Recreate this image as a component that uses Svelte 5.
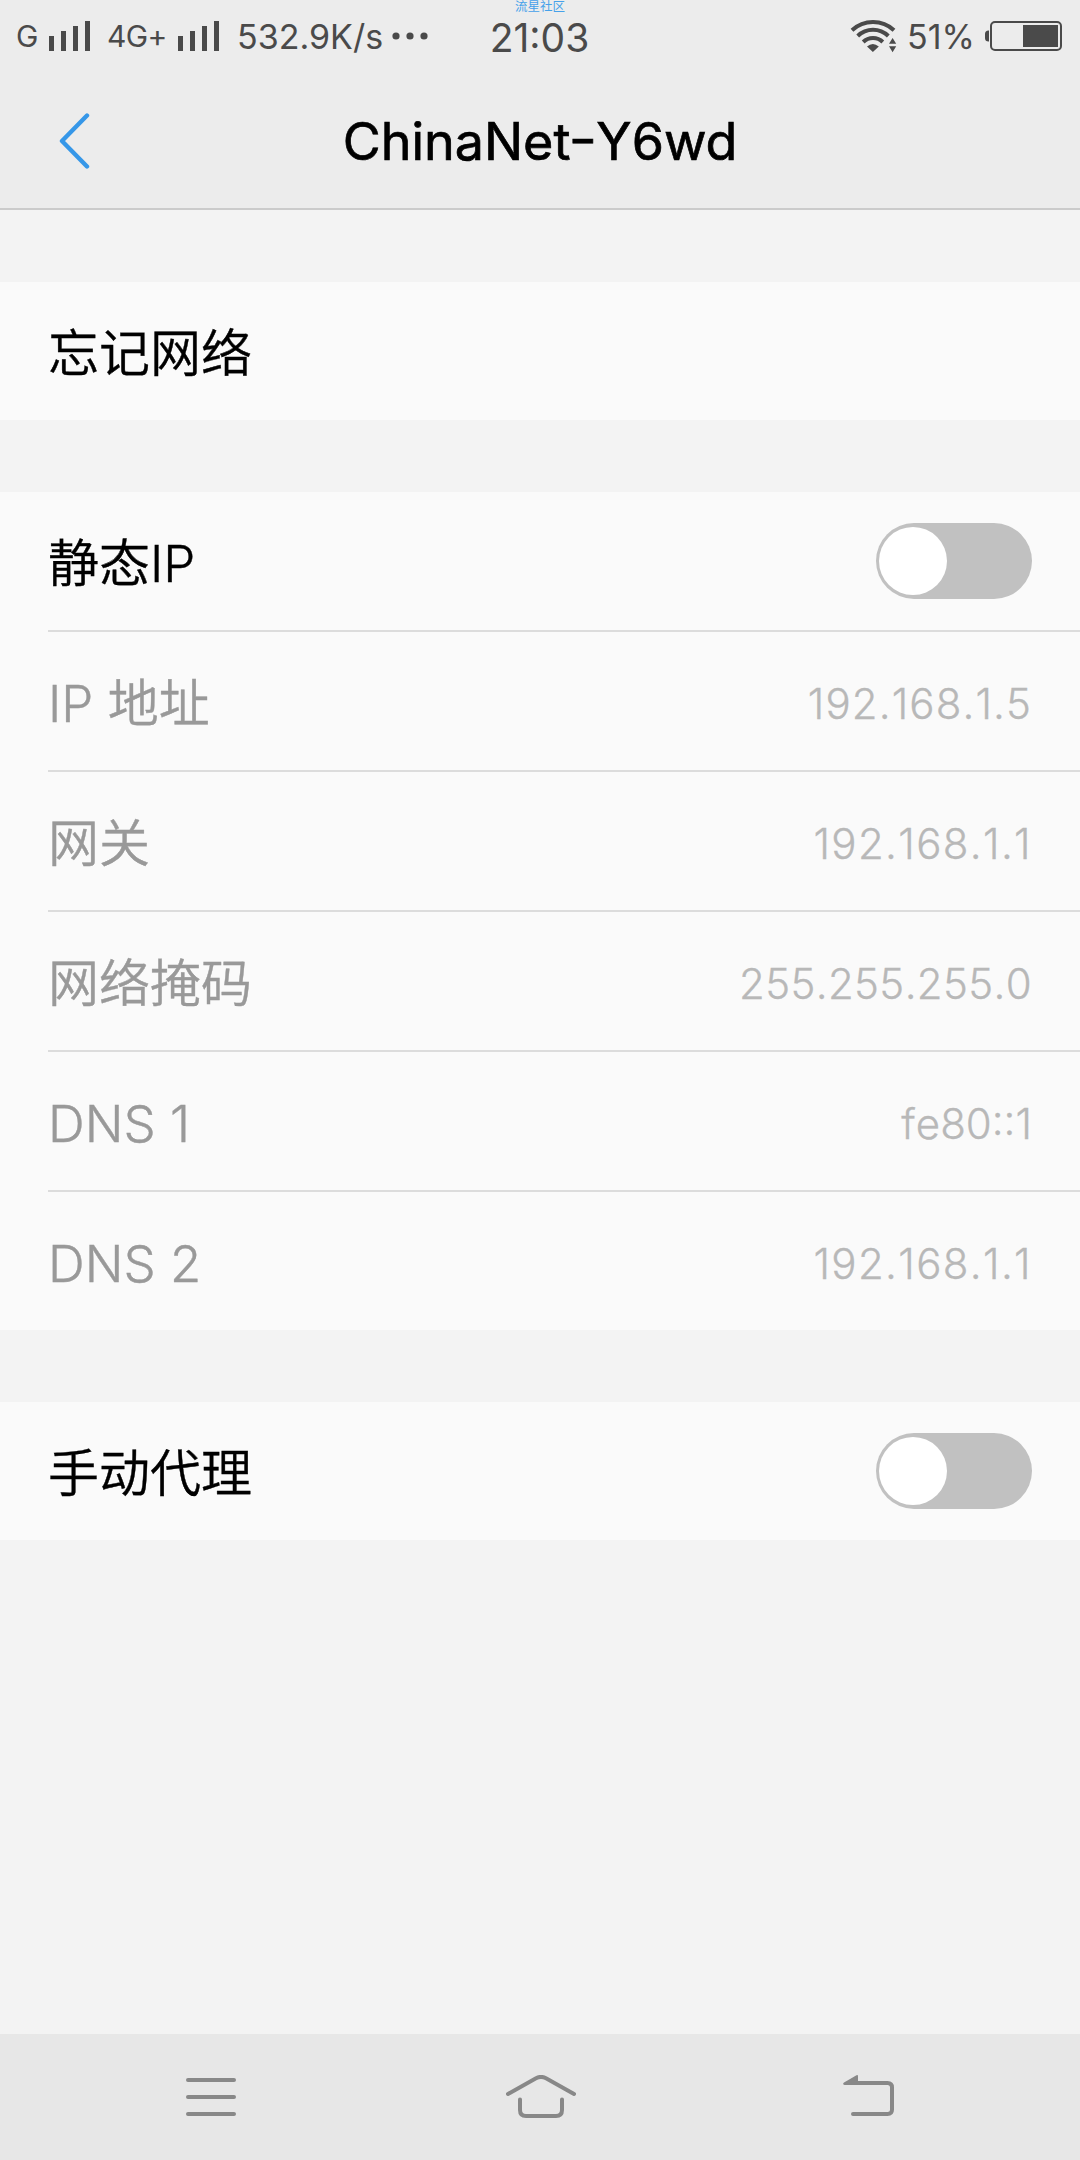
<script>
	let staticIp = false;
	let manualProxy = false;

	const details = [
		{ label: 'IP 地址', value: '192.168.1.5', tracking: 1.1 },
		{ label: '网关', value: '192.168.1.1', tracking: 1.35 },
		{ label: '网络掩码', value: '255.255.255.0', tracking: 0.35 },
		{ label: 'DNS 1', value: 'fe80::1', tracking: 0 },
		{ label: 'DNS 2', value: '192.168.1.1', tracking: 1.35 }
	];
</script>

<div class="screen">
	<div class="status">
		<div class="status-left">
			<span class="net g">G</span>
			<svg class="bars" width="42" height="30" viewBox="0 0 42 30">
				<path d="M0 15h5v15H0zM12 10h5v20h-5zM24 5h5v25h-5zM36 0h5v30h-5z" />
			</svg>
			<span class="net lte">4G+</span>
			<svg class="bars" width="42" height="30" viewBox="0 0 42 30">
				<path d="M0 15h5v15H0zM12 10h5v20h-5zM24 5h5v25h-5zM36 0h5v30h-5z" />
			</svg>
			<span class="speed">532.9K/s</span>
			<svg class="dots" width="36" height="8" viewBox="0 0 36 8">
				<circle cx="4" cy="4" r="3.6" />
				<circle cx="18" cy="4" r="3.6" />
				<circle cx="32" cy="4" r="3.6" />
			</svg>
		</div>
		<div class="status-center">
			<span class="community">流星社区</span>
			<span class="clock">21:03</span>
		</div>
		<div class="status-right">
			<svg class="wifi" width="47" height="34" viewBox="0 0 47 34">
				<g fill="none" stroke="#4a4a4a" stroke-width="4">
					<path d="M2 11.2A31 31 0 0 1 44 11.2" />
					<path d="M7.7 17A22 22 0 0 1 38.3 17" />
					<path d="M13.2 23A14 14 0 0 1 32.8 23" />
				</g>
				<path d="M17 27.6Q22.9 22.6 28.8 27.6L22.9 33z" />
				<path d="M39 24.7h7.2L42.6 19zM39 27.3h7.2l-3.6 6z" />
			</svg>
			<span class="percent">51%</span>
			<svg class="battery" width="77" height="30" viewBox="0 0 77 30">
				<path d="M4 9.5H3.5A3.5 3.5 0 0 0 0 13v4a3.5 3.5 0 0 0 3.5 3.5H4z" />
				<rect x="6" y="1" width="70" height="28" rx="4" fill="none" stroke="#4a4a4a" stroke-width="2" />
				<path d="M38 4h35v22H38z" />
			</svg>
		</div>
	</div>

	<header>
		<button class="back" aria-label="返回">
			<svg width="32" height="60" viewBox="0 0 32 60">
				<path d="M28 4.5L3 30L28 55.5" fill="none" stroke="#3697e8" stroke-width="4.4" stroke-linecap="round" stroke-linejoin="round" />
			</svg>
		</button>
		<h1>ChinaNet<span class="hyphen">-</span>Y6wd</h1>
	</header>

	<main>
		<section>
			<div class="row"><span class="label">忘记网络</span></div>
		</section>

		<section>
			<div class="row">
				<span class="label">静态IP</span>
				<button class="toggle" class:on={staticIp} aria-label="静态IP" on:click={() => (staticIp = !staticIp)}>
					<span class="knob"></span>
				</button>
			</div>
			{#each details as item}
				<div class="row detail">
					<span class="label">{item.label}</span>
					<span class="value" style="letter-spacing: {item.tracking}px">{item.value}</span>
				</div>
			{/each}
		</section>

		<section>
			<div class="row">
				<span class="label">手动代理</span>
				<button class="toggle" class:on={manualProxy} aria-label="手动代理" on:click={() => (manualProxy = !manualProxy)}>
					<span class="knob"></span>
				</button>
			</div>
		</section>
	</main>

	<nav>
		<svg width="50" height="44" viewBox="0 0 50 44">
			<path d="M2 5h46M2 22h46M2 39h46" />
		</svg>
		<svg class="home" width="70" height="44" viewBox="0 0 70 44">
			<path d="M2 19L30 3.2Q35 .6 40 3.2L68 19" />
			<path d="M14 24.5V35q0 6 6 6h30q6 0 6-6V24.5" />
		</svg>
		<svg width="52" height="44" viewBox="0 0 52 44">
			<path d="M10 8h34.500q4.500 0 4.500 4.500v22q0 4.500-4.500 4.500H10" />
			<path class="head" d="M1 7.500L13.500.3Q15 -.5 15 1.200V10H1.500Q-1 9 1 7.500z" />
		</svg>
	</nav>
</div>

<style>
	:global(body) {
		margin: 0;
		background: #f3f3f3;
	}

	.screen {
		display: flex;
		flex-direction: column;
		width: 1080px;
		height: 2160px;
		overflow: hidden;
		background: #f3f3f3;
		font-family: Inter, "Noto Sans CJK SC", sans-serif;
		color: #000;
	}

	svg {
		display: block;
		flex: none;
	}

	button {
		border: none;
		padding: 0;
		background: none;
		cursor: pointer;
	}

	.status {
		display: grid;
		grid-template-columns: 479px 120px 481px;
		height: 72px;
		background: #ececec;
		color: #4a4a4a;
		fill: #4a4a4a;
		white-space: nowrap;
	}

	.status-left,
	.status-right {
		display: flex;
		align-items: center;
		height: 72px;
	}

	.net {
		font-size: 30px;
		line-height: 72px;
		letter-spacing: -0.6px;
	}

	.g {
		width: 33px;
		margin-left: 16px;
	}

	.lte {
		width: 71px;
		margin-left: 16px;
	}

	.speed {
		width: 155px;
		margin-left: 17px;
		font-size: 34px;
		line-height: 74px;
		padding-top: 2px;
	}

	.status-center {
		display: flex;
		flex-direction: column;
		align-items: center;
	}

	.community {
		height: 13px;
		padding-left: 2px;
		font-size: 12.5px;
		line-height: 14px;
		color: #45a1ea;
	}

	.clock {
		padding-left: 1px;
		font-size: 39px;
		line-height: 50px;
	}

	.status-right {
		justify-content: flex-end;
		padding-right: 18px;
	}

	.percent {
		width: 78px;
		margin-left: 10px;
		font-size: 34px;
		line-height: 74px;
		padding-top: 2px;
	}

	header {
		display: grid;
		grid-template-columns: 140px 1fr 140px;
		align-items: center;
		height: 136px;
		border-bottom: 2px solid #cbcbcb;
		background: #ececec;
	}

	.back {
		padding: 2px 0 0 59px;
	}

	h1 {
		margin: 0;
		padding-top: 3px;
		font-size: 52px;
		font-weight: 400;
		line-height: 133px;
		text-align: center;
		-webkit-text-stroke: 0.7px #000;
	}

	.hyphen {
		display: inline-block;
		padding: 0 1px;
		font-feature-settings: "case";
		transform: scaleX(1.2);
	}

	main {
		display: flex;
		flex: 1;
		flex-direction: column;
		gap: 72px;
		padding-top: 72px;
	}

	section {
		background: #fafafa;
	}

	.row {
		display: flex;
		align-items: center;
		justify-content: space-between;
		height: 138px;
		margin-left: 48px;
		padding-right: 48px;
	}

	.detail {
		border-top: 2px solid #dcdcdc;
		color: #999;
	}

	.label {
		padding-top: 5px;
		font-size: 51px;
		font-weight: 350;
		line-height: 133px;
		-webkit-text-stroke: 0.4px currentColor;
	}

	.value {
		padding-top: 5px;
		font-size: 42px;
		font-weight: 300;
		line-height: 133px;
		font-kerning: none;
		color: #b8b8b8;
		-webkit-text-stroke: 0.3px currentColor;
	}

	.toggle {
		display: flex;
		align-items: center;
		width: 156px;
		height: 76px;
		padding: 0 3px;
		border-radius: 38px;
		background: #c1c1c1;
	}

	.toggle.on {
		justify-content: flex-end;
		background: #3697e8;
	}

	.knob {
		width: 68px;
		height: 68px;
		border-radius: 50%;
		background: #fff;
	}

	nav {
		display: flex;
		align-items: center;
		justify-content: space-between;
		height: 126px;
		padding: 0 185px 0 186px;
		background: #e7e7e7;
	}

	nav path {
		fill: none;
		stroke: #888;
		stroke-width: 4;
		stroke-linecap: round;
	}

	.home {
		margin-left: 3px;
	}

	nav .head {
		fill: #888;
		stroke: none;
	}
</style>
